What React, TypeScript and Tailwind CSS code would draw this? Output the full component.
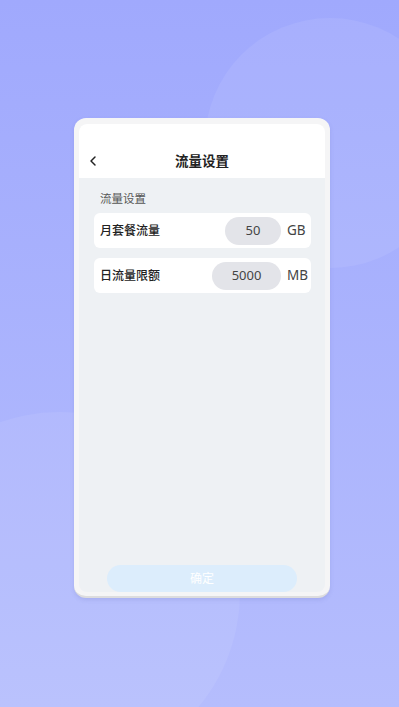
import { ChevronLeft } from "lucide-react";

const font = {
  fontFamily: '"Noto Sans", "Noto Sans CJK SC", sans-serif',
};

interface RowProps {
  label: string;
  value: string;
  unit: string;
  pillWidth: string;
}

function LimitRow({ label, value, unit, pillWidth }: RowProps) {
  return (
    <div className="flex h-[35px] items-center rounded-[6px] bg-white pl-[6px] pr-[6px]">
      <span className="flex-1 text-[12px] font-medium text-[#222]">{label}</span>
      <div
        className={`flex h-[28px] items-center justify-center rounded-full bg-[#e3e4e9] text-[13px] text-[#444] ${pillWidth}`}
      >
        {value}
      </div>
      <span className="ml-[6px] w-[18px] text-[13.5px] text-[#444]">{unit}</span>
    </div>
  );
}

export default function App() {
  return (
    <div
      className="relative h-[707px] w-[399px] overflow-hidden bg-gradient-to-b from-[#a0a9fd] to-[#b5bdfd]"
      style={font}
    >
      {/* soft background circles */}
      <div className="absolute left-[205px] top-[18px] h-[250px] w-[250px] rounded-full bg-white/[0.07]" />
      <div className="absolute left-[-120px] top-[412px] h-[360px] w-[360px] rounded-full bg-white/[0.07]" />

      <div className="relative pl-[74px] pt-[118px]">
        <div className="w-[256px] rounded-[12px] border-b-[2px] border-[#dcdcde] bg-[#f5f5f6] px-[5px] pb-[4px] pt-[6px] shadow-[0_2px_4px_rgba(80,90,160,0.15)]">
          <div className="flex h-[468px] flex-col overflow-hidden rounded-[8px] bg-[#eef1f4]">
            {/* header */}
            <div className="relative flex h-[54px] items-end justify-center bg-white pb-[7px]">
              <ChevronLeft
                className="absolute bottom-[9px] left-[6px] h-[16px] w-[16px] text-[#222]"
                strokeWidth={2.2}
              />
              <span className="text-[13.5px] font-semibold text-[#222]">流量设置</span>
            </div>

            {/* content */}
            <div className="flex flex-1 flex-col pl-[15px] pr-[14px] pt-[13px]">
              <div className="pl-[6px] text-[11.5px] leading-[16px] text-[#555]">流量设置</div>
              <div className="mt-[6px] flex flex-col gap-[10px]">
                <LimitRow label="月套餐流量" value="50" unit="GB" pillWidth="w-[56px]" />
                <LimitRow label="日流量限额" value="5000" unit="MB" pillWidth="w-[69px]" />
              </div>
            </div>

            {/* confirm button */}
            <div className="flex justify-center">
              <button
                type="button"
                className="flex h-[27px] w-[190px] items-center justify-center rounded-full bg-[#dcedfc] text-[12px] text-white"
              >
                确定
              </button>
            </div>
          </div>
        </div>
      </div>
    </div>
  );
}
